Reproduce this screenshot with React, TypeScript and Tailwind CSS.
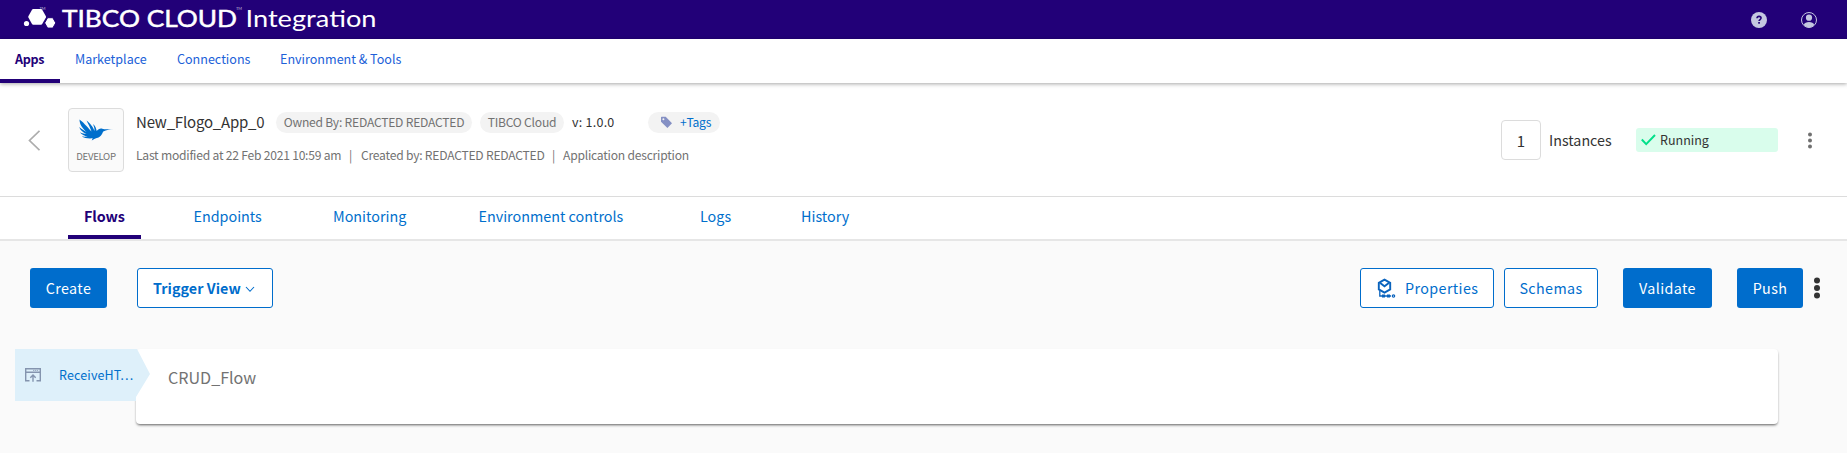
import React from "react";

function LogoMark() {
  return (
    <svg width="380" height="39" viewBox="0 0 380 39" className="block shrink-0" fill="#fff">
      <circle cx="26.5" cy="23.5" r="2.6" />
      <path d="M33.200 9h7.800q.8 0 1.200.7l3.700 6.600q.3.600 0 1.200l-3.700 6.600q-.4.700-1.200.700H33.200q-.8 0-1.200-.700l-3.600-6.600q-.3-.6 0-1.200L32 9.700q.4-.7 1.200-.7z" />
      <path d="M47.600 17.700h5.200l3 5.200-3 5.200h-5.200l-3-5.200z" stroke="#220078" strokeWidth="1" />
      <text x="39.500" y="9.500" fontSize="4" textLength="6" className="font-[Lato]" fillOpacity=".7">TM</text>
      <text x="62" y="27" fontSize="23.500" textLength="175" lengthAdjust="spacingAndGlyphs" className="font-[Lato,sans-serif]" stroke="#fff" strokeWidth=".5">TIBCO CLOUD</text>
      <text x="236" y="9.500" fontSize="4" textLength="6" className="font-[Lato]" fillOpacity=".7">TM</text>
      <text x="245.500" y="27" fontSize="23.500" textLength="131" lengthAdjust="spacingAndGlyphs" className="font-[Lato,sans-serif]">Integration</text>
    </svg>
  );
}

function Bird() {
  return (
    <svg width="36" height="22" viewBox="0 0 36 22" className="block" fill="#006fcc">
      <path d="M1.500.5C4.500 2.500 9 7.500 13.500 12.500 12 8 9.500 3.500 8.500 1.500c3.500 2.500 7 7 8 10.500C16.800 9 15.500 6.500 15 5c2.300 2 3.300 4.500 3.700 7 1.500-1.500 3.500-3 5.500-2.200 3.500 1 7.500.2 11.500.200-3 .3-7.500 1-10.500 2.500-1.200 3-3 6-6.500 6.500-1.800.4-3 1.500-5 2.500l1-2.200c-4 .5-8.500-.2-11-1.800 2.500.2 4.500.2 6-.200C6.500 17 3.500 15.500 1.800 13.200c2.200 1 4.700 1.600 6.700 1.800C5 13.500 2 11 1.200 8c2.300 2 5 3.800 7.500 5C4.500 9.500 1.500 5.500 1.500.5z" />
    </svg>
  );
}

function Dots({ r, gap, color }: { r: number; gap: number; color: string }) {
  const h = gap * 2 + r * 2 + 1;
  return (
    <svg width="8" height={h} viewBox={`0 0 8 ${h}`} className="block shrink-0" fill={color}>
      <circle cx="4" cy={h / 2 - gap} r={r} />
      <circle cx="4" cy={h / 2} r={r} />
      <circle cx="4" cy={h / 2 + gap} r={r} />
    </svg>
  );
}

function HelpIcon() {
  return (
    <svg width="16" height="16" viewBox="0 0 16 16" className="block">
      <circle cx="8" cy="8" r="8" fill="#c4c7e0" />
      <path d="M6 6.300c.1-1.200.9-1.900 2.050-1.900 1.200 0 2 .7 2 1.700 0 1.500-1.950 1.500-1.950 3" fill="none" stroke="#220078" strokeWidth="1.600" />
      <rect x="7.200" y="10" width="1.700" height="1.700" fill="#220078" />
    </svg>
  );
}

function UserIcon() {
  return (
    <svg width="16" height="16" viewBox="0 0 16 16" className="block">
      <circle cx="8" cy="8" r="7.500" fill="none" stroke="#c4c7e0" />
      <circle cx="8" cy="5.700" r="3.100" fill="#c4c7e0" />
      <path d="M2.800 13c.6-2.200 2.700-2.900 5.200-2.900s4.600.7 5.200 2.900C11.800 14.600 10 15.500 8 15.500S4.200 14.600 2.800 13z" fill="#c4c7e0" />
    </svg>
  );
}

function PropertiesIcon() {
  return (
    <svg width="19" height="20" viewBox="0 0 19 20" className="block shrink-0" fill="none" stroke="#0a63bd" strokeWidth="1.900">
      <path d="M7.500 1.600l5.700 3.200v6.600l-5.700 3.200-5.700-3.200V4.800z" />
      <path d="M3.200 5l4.300 3.300L11.800 5" />
      <path d="M2.800 12.500V18H14" strokeWidth="1.300" />
      <path d="M5 18h3M10 18h3" strokeWidth="2.800" />
      <circle cx="16.500" cy="18" r="1.200" strokeWidth="1.200" />
    </svg>
  );
}

function TriggerIcon() {
  return (
    <svg width="16" height="14" viewBox="0 0 16 14" className="block shrink-0" fill="none" stroke="#8494ae" strokeWidth="1.400">
      <path d="M4.500 12.700H.7V.7h14.600v12h-3.800" />
      <path d="M1 4.200h14M8 13.700V8M5.300 9.700L8 7l2.700 2.700" />
      <path d="M8 2.400h5.500" strokeWidth=".8" strokeDasharray="1.300 .6" />
    </svg>
  );
}

const button = "flex h-10 shrink-0 items-center rounded-[3px] text-[14.3px] leading-none";
const solid = `${button} justify-center bg-[#006dcc] tracking-[0.4px] text-white`;
const outline = `${button} border border-[#006dcc] bg-white text-[#006dcc]`;
const chip = "flex h-[21px] shrink-0 items-center rounded-full bg-[#f3f3f3] pb-[2px] text-[12.1px] leading-[17px] tracking-[-0.22px] text-[#727272]";

export default function App() {
  return (
    <div className="flex h-[453px] w-full flex-col overflow-hidden bg-[#fafafa] font-['Noto_Sans_CJK_SC',sans-serif] whitespace-nowrap text-[#333]">
      <header className="flex h-[39px] shrink-0 items-center justify-between bg-[#220078] pr-[30px]">
        <LogoMark />
        <div className="flex gap-[34px]">
          <HelpIcon />
          <UserIcon />
        </div>
      </header>

      <nav className="relative z-10 flex h-11 shrink-0 bg-white text-[12.55px] leading-[39px] text-[#2060d8] shadow-[0_1px_4px_rgba(0,0,0,0.35)]">
        <a className="w-[60px] border-b-4 border-[#220078] pl-[15px] font-bold tracking-[-0.3px] text-[#220078]">Apps</a>
        <a className="w-[102px] pl-[15px]">Marketplace</a>
        <a className="w-[103px] pl-[15px]">Connections</a>
        <a className="pl-[15px]">Environment &amp; Tools</a>
      </nav>

      <section className="flex h-[114px] shrink-0 items-center border-b border-[#dcdcdc] bg-white pt-px">
        <svg width="12" height="21" viewBox="0 0 12 21" className="ml-[28px] block shrink-0" fill="none" stroke="#adadad" strokeWidth="1.700">
          <path d="M11.500.8L1.500 10.500l10 9.700" />
        </svg>
        <div className="ml-[28px] flex h-16 w-14 shrink-0 flex-col items-center rounded-[4px] border border-[#dcdcdc] bg-[#fafafa] pt-[10px]">
          <Bird />
          <span className="mt-[8px] text-[9.6px] leading-[14px] tracking-[-0.3px] text-[#727272]">DEVELOP</span>
        </div>
        <div className="ml-3 flex flex-col pb-1">
          <div className="flex h-[23px] items-center">
            <span className="w-[140px] pb-px text-[15px] leading-[22px] tracking-[-0.2px]">New_Flogo_App_0</span>
            <span className={`${chip} w-[196px] justify-center`}>Owned By: REDACTED REDACTED</span>
            <span className={`${chip} ml-2 w-[84px] justify-center`}>TIBCO Cloud</span>
            <span className="ml-2 w-[76px] pb-px text-[12.5px] leading-[20px] tracking-[0.25px]">v: 1.0.0</span>
            <span className={`${chip} w-[72px] pl-3`}>
              <svg width="13" height="13" viewBox="0 0 13 13" className="block translate-y-px" fill="#8590c4">
                <path fillRule="evenodd" d="M1.500.800h4.200l6.300 6.400-4.600 4.800L1 5.700V1.300zM3.400 2.200a1 1 0 100 2 1 1 0 000-2z" />
              </svg>
              <span className="ml-[7px] text-[#006fcc]">+Tags</span>
            </span>
          </div>
          <div className="mt-[11px] flex h-5 text-[12.1px] leading-5 tracking-[-0.22px] text-[#727272]">
            <span className="w-[213px]">Last modified at 22 Feb 2021 10:59 am</span>
            <span className="w-[12px]">|</span>
            <span className="w-[191px]">Created by: REDACTED REDACTED</span>
            <span className="w-[11px]">|</span>
            <span>Application description</span>
          </div>
        </div>
        <div className="ml-auto flex items-center pr-[33px]">
          <div className="flex size-10 items-center justify-center rounded-[4px] border border-[#dcdcdc] text-[15px] leading-none">1</div>
          <span className="ml-2 w-[87px] text-[14.3px] leading-5">Instances</span>
          <div className="flex h-6 w-[142px] items-center rounded-[3px] bg-[#d9fdec] pl-[5px]">
            <svg width="15" height="12" viewBox="0 0 15 12" className="block" fill="none" stroke="#00e08a" strokeWidth="2">
              <path d="M.8 5.500l4.400 4.600L14 1" />
            </svg>
            <span className="ml-1 text-[12.5px] leading-none">Running</span>
          </div>
          <div className="ml-[28px]">
            <Dots r={2} gap={6} color="#707070" />
          </div>
        </div>
      </section>

      <nav className="grid h-[44px] shrink-0 grid-cols-[109.5px_139.5px_145.5px_221.5px_101px_auto] border-b-2 border-[#e6e6e6] bg-white pl-[68px] text-[14.35px] leading-[38px] text-[#006fcc]">
        <a className="w-[73px] border-b-4 border-[#220078] pl-4 font-bold tracking-[-0.1px] text-[#220078]">Flows</a>
        <a className="pl-4">Endpoints</a>
        <a className="pl-4">Monitoring</a>
        <a className="pl-4">Environment controls</a>
        <a className="pl-4">Logs</a>
        <a className="pl-4">History</a>
      </nav>

      <div className="mt-[27px] flex h-10 shrink-0 items-center pl-[30px] pr-[26px]">
        <button className={`${solid} w-[77px]`}>Create</button>
        <button className={`${outline} ml-[30px] w-[136px] pl-[15px] font-bold tracking-[0.05px]`}>
          Trigger View
          <svg width="10" height="7" viewBox="0 0 10 7" className="ml-[4px] mt-[3px] block" fill="none" stroke="#006dcc" strokeWidth="1.100">
            <path d="M1 1l4 4.300L9 1" />
          </svg>
        </button>
        <div className="ml-auto flex items-center">
          <button className={`${outline} w-[134px] pl-4 tracking-[0.4px]`}>
            <PropertiesIcon />
            <span className="ml-[9px]">Properties</span>
          </button>
          <button className={`${outline} ml-[10px] w-[94px] justify-center tracking-[0.4px]`}>Schemas</button>
          <button className={`${solid} ml-[25px] w-[89px]`}>Validate</button>
          <button className={`${solid} ml-[25px] w-[66px]`}>Push</button>
          <div className="ml-[10px]">
            <Dots r={3} gap={7.500} color="#333" />
          </div>
        </div>
      </div>

      <main className="relative mt-[41px] ml-[136px] h-[75px] w-[1642px] shrink-0 rounded-[4px] bg-white pt-[18px] pl-8 shadow-[0_2px_3px_-1px_rgba(0,0,0,0.55),0_1px_2px_rgba(0,0,0,0.12)]">
        <h2 className="text-[16.1px] leading-[20px] text-[#727272]">CRUD_Flow</h2>
        <div className="absolute top-0 left-[-121px] flex h-[52px] w-[135px] items-center bg-[#def0fa] pl-[10px] [clip-path:polygon(0_0,122px_0,135px_25px,121px_48px,121px_52px,0_52px)]">
          <TriggerIcon />
          <span className="ml-[18px] pt-px text-[12.5px] leading-none tracking-[0.15px] text-[#006fcc]">ReceiveHT…</span>
        </div>
      </main>
    </div>
  );
}
